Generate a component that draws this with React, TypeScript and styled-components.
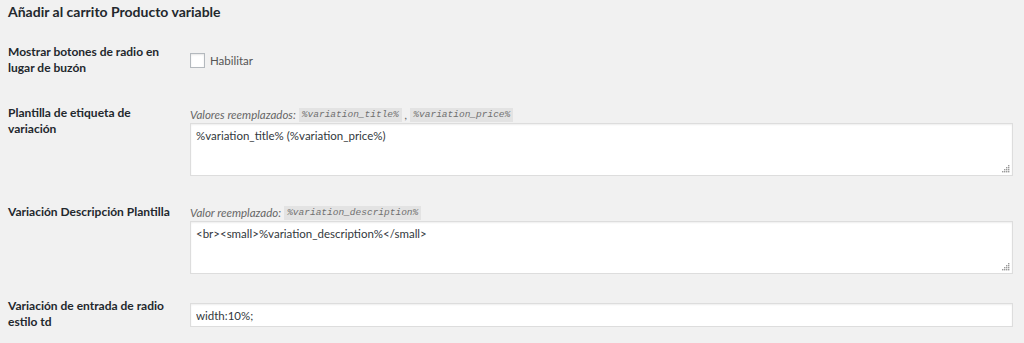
import React from "react";
import styled, { createGlobalStyle } from "styled-components";

const GlobalStyle = createGlobalStyle`
  html, body {
    margin: 0;
    padding: 0;
    background: #f1f1f1;
  }

  body {
    font-family: Lato, "Noto Sans", sans-serif;
    font-size: 12px;
    color: #444;
  }
`;

const Page = styled.div`
  width: 1024px;
  height: 343px;
  overflow: hidden;
  background: #f1f1f1;
  padding: 0 11px 0 8px;
  box-sizing: border-box;
`;

const Title = styled.h2`
  margin: 0;
  height: 24px;
  line-height: 24px;
  font-size: 14px;
  font-weight: 700;
  color: #23282d;
`;

const Table = styled.div`
  display: flex;
  flex-direction: column;
`;

const Row = styled.div<{ $bottom: number }>`
  display: grid;
  grid-template-columns: 182px 1fr;
  padding-top: 20px;
  padding-bottom: ${(p) => p.$bottom}px;
`;

const Label = styled.div`
  font-weight: 700;
  font-size: 12px;
  line-height: 16px;
  color: #23282d;
  padding-right: 20px;
`;

const Field = styled.div<{ $offset: number }>`
  padding-top: ${(p) => p.$offset}px;
  display: flex;
  flex-direction: column;
`;

const CheckLine = styled.label`
  display: flex;
  align-items: center;
  gap: 5px;
  height: 16px;
  font-size: 11.5px;
  color: #555;
`;

const Box = styled.span`
  width: 13px;
  height: 13px;
  border: 1px solid #b4b9be;
  background: #fff;
  box-shadow: inset 0 1px 2px rgba(0, 0, 0, 0.1);
`;

const Description = styled.div`
  font-style: italic;
  font-size: 11.5px;
  color: #666;
  line-height: 16px;
  height: 16px;
  display: flex;
  align-items: center;
  gap: 3px;
`;

const Code = styled.code`
  font-family: "Liberation Mono", "DejaVu Sans Mono", monospace;
  font-style: italic;
  font-size: 9.5px;
  line-height: 14px;
  padding: 0 3px;
  background: #e3e3e3;
  color: #707070;
`;

const AreaWrap = styled.div`
  position: relative;
`;

const Area = styled.textarea`
  display: block;
  width: 100%;
  height: 53px;
  box-sizing: border-box;
  margin: 0;
  padding: 4px 5px;
  border: 1px solid #ddd;
  box-shadow: inset 0 1px 2px rgba(0, 0, 0, 0.07);
  background: #fff;
  font-family: inherit;
  font-size: 11.5px;
  line-height: 16px;
  color: #32373c;
  resize: none;
  outline: none;
`;

const Grip = styled.svg`
  position: absolute;
  right: 3px;
  bottom: 3px;
`;

const Input = styled.input`
  display: block;
  width: 100%;
  height: 24px;
  box-sizing: border-box;
  margin: 0;
  padding: 0 5px;
  border: 1px solid #ddd;
  box-shadow: inset 0 1px 2px rgba(0, 0, 0, 0.07);
  background: #fff;
  font-family: inherit;
  font-size: 11.5px;
  color: #32373c;
  outline: none;
`;

const ResizeGrip = () => (
  <Grip width="8" height="8" viewBox="0 0 8 8">
    {[
      [6, 0],
      [6, 2],
      [4, 2],
      [6, 4],
      [4, 4],
      [2, 4],
      [6, 6],
      [4, 6],
      [2, 6],
      [0, 6],
    ].map(([x, y]) => (
      <rect key={`${x}-${y}`} x={x} y={y} width="1.4" height="1.4" fill="#9a9a9a" />
    ))}
  </Grip>
);

const TextBlock: React.FC<{ value: string }> = ({ value }) => (
  <AreaWrap>
    <Area defaultValue={value} />
    <ResizeGrip />
  </AreaWrap>
);

export default function App() {
  return (
    <Page>
      <GlobalStyle />
      <Title>Añadir al carrito Producto variable</Title>
      <Table>
        <Row $bottom={9}>
          <Label>Mostrar botones de radio en lugar de buzón</Label>
          <Field $offset={8}>
            <CheckLine>
              <Box />
              Habilitar
            </CheckLine>
          </Field>
        </Row>
        <Row $bottom={8}>
          <Label>Plantilla de etiqueta de variación</Label>
          <Field $offset={2}>
            <Description>
              Valores reemplazados: <Code>%variation_title%</Code>,{" "}
              <Code>%variation_price%</Code>
            </Description>
            <TextBlock value="%variation_title% (%variation_price%)" />
          </Field>
        </Row>
        <Row $bottom={4}>
          <Label>Variación Descripción Plantilla</Label>
          <Field $offset={1}>
            <Description>
              Valor reemplazado: <Code>%variation_description%</Code>
            </Description>
            <TextBlock value="<br><small>%variation_description%</small>" />
          </Field>
        </Row>
        <Row $bottom={10}>
          <Label>Variación de entrada de radio estilo td</Label>
          <Field $offset={5}>
            <Input defaultValue="width:10%;" />
          </Field>
        </Row>
      </Table>
    </Page>
  );
}
